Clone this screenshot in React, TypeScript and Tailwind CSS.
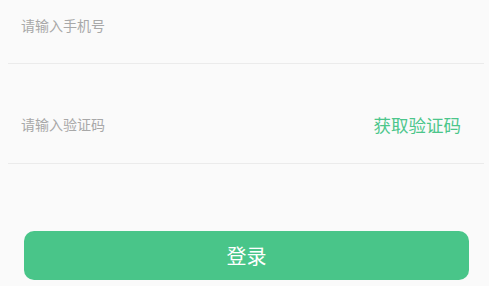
export default function App() {
  return (
    <div
      className="w-[489px] h-[286px] overflow-hidden bg-[#fafafa]"
      style={{ fontFamily: '"Noto Sans CJK SC", "Noto Sans", sans-serif' }}
    >
      <div className="ml-[8px] w-[476px]">
        <div className="h-[64px] border-b border-[#ebebeb] pt-[12px] pl-[13px]">
          <input
            placeholder="请输入手机号"
            className="w-[300px] h-[20px] bg-transparent text-[14px] leading-[20px] text-[#333] placeholder-[#a8a8a8] outline-none"
          />
        </div>
        <div className="h-[100px] border-b border-[#ebebeb] pt-[50px] pl-[13px] pr-[23px] flex items-start justify-between">
          <input
            placeholder="请输入验证码"
            className="w-[250px] h-[20px] bg-transparent text-[14px] leading-[20px] text-[#333] placeholder-[#a8a8a8] outline-none"
          />
          <button className="mt-[1px] text-[17.5px] leading-[20px] text-[#4cc68b]">获取验证码</button>
        </div>
      </div>
      <div className="pt-[67px] pl-[24px]">
        <button className="w-[445px] h-[49px] rounded-[10px] bg-[#49c589] text-white text-[20px] leading-[49px]">
          登录
        </button>
      </div>
    </div>
  )
}
